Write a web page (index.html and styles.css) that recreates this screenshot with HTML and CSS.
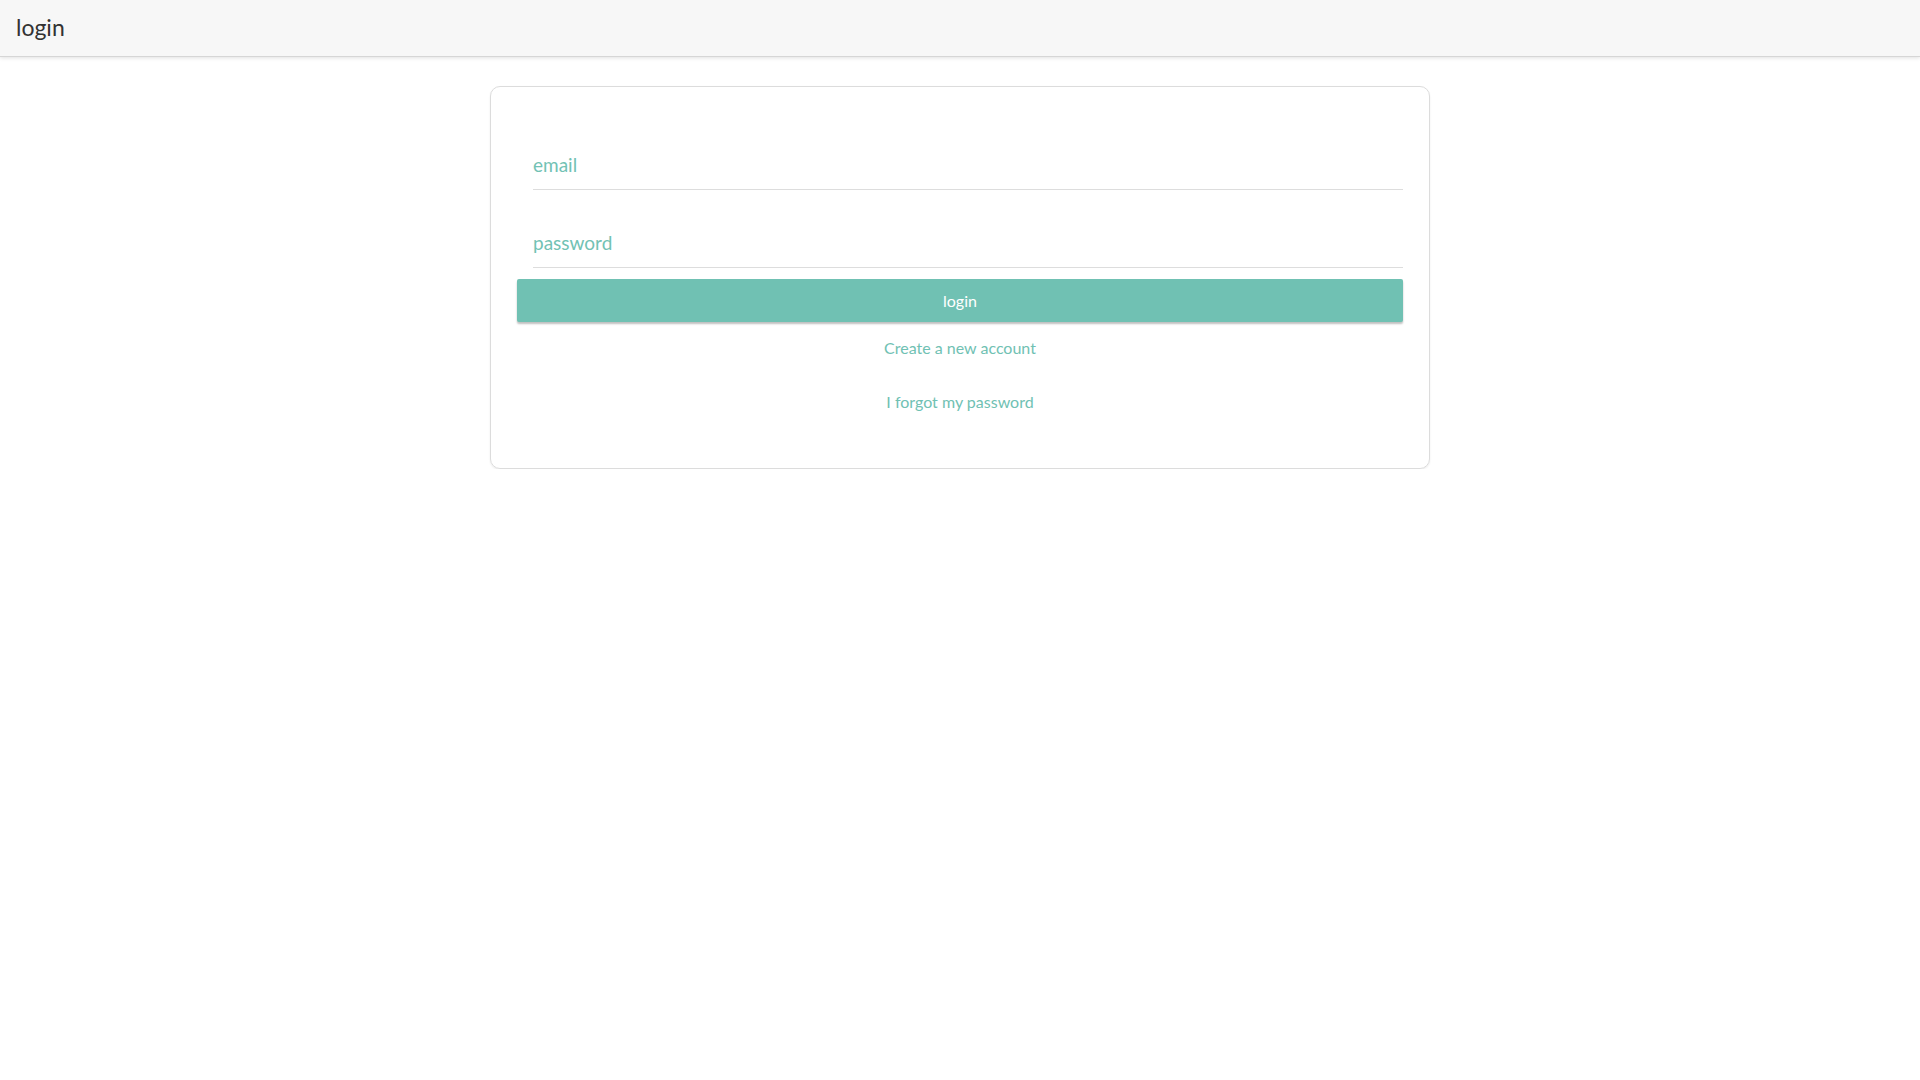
FILE: index.html
```html
<!DOCTYPE html>
<html lang="en">
<head>
<meta charset="utf-8">
<title>login</title>
<link rel="stylesheet" href="styles.css">
</head>
<body>
<header class="topbar">
  <span class="topbar-title">login</span>
</header>
<main class="page">
  <form class="card">
    <input class="field field-email" type="email" placeholder="email">
    <input class="field field-password" type="password" placeholder="password">
    <button class="btn-login" type="button">login</button>
    <a class="link link-create" href="#">Create a new account</a>
    <a class="link link-forgot" href="#">I forgot my password</a>
  </form>
</main>
</body>
</html>
```
FILE: styles.css
```css
* { box-sizing: border-box; }
html, body {
  margin: 0;
  padding: 0;
  background: #ffffff;
  font-family: Lato, "Open Sans", "Liberation Sans", sans-serif;
}
.topbar {
  height: 56px;
  background: #f7f7f7;
  box-shadow: 0 1px 0 #d6d6d6, 0 2px 4px rgba(0,0,0,0.12);
  display: flex;
  align-items: center;
  padding-left: 16px;
  position: relative;
  z-index: 1;
}
.topbar-title {
  font-size: 23px;
  color: #333333;
  line-height: 1;
  margin-top: -1px;
}
.page {
  display: flex;
  justify-content: center;
  padding-top: 30px;
}
.card {
  width: 940px;
  border: 1px solid #dcdcdc;
  border-radius: 10px;
  box-shadow: 0 1px 2px rgba(0,0,0,0.08);
  padding: 26px 26px 54px 26px;
  display: flex;
  flex-direction: column;
  align-items: stretch;
}
.field {
  display: block;
  margin-left: 16px;
  height: 43px;
  border: none;
  border-bottom: 1px solid #dddddd;
  outline: none;
  font-family: Lato, "Open Sans", "Liberation Sans", sans-serif;
  font-size: 19px;
  color: #333;
  padding: 0 0 7px 0;
  background: transparent;
}
.field::placeholder {
  color: #72c2b4;
  opacity: 1;
}
.field-email { margin-top: 34px; }
.field-password { margin-top: 35px; }
.btn-login {
  margin-top: 11px;
  height: 43px;
  border: none;
  border-radius: 2px;
  background: #70c1b3;
  color: #ffffff;
  font-family: Lato, "Open Sans", "Liberation Sans", sans-serif;
  font-size: 16px;
  box-shadow: 0 2px 2px rgba(0,0,0,0.25);
  cursor: pointer;
}
.link {
  align-self: center;
  color: #70c1b3;
  text-decoration: none;
  font-size: 16px;
  line-height: 24px;
}
.link-create { margin-top: 14px; }
.link-forgot { margin-top: 30px; }
```
